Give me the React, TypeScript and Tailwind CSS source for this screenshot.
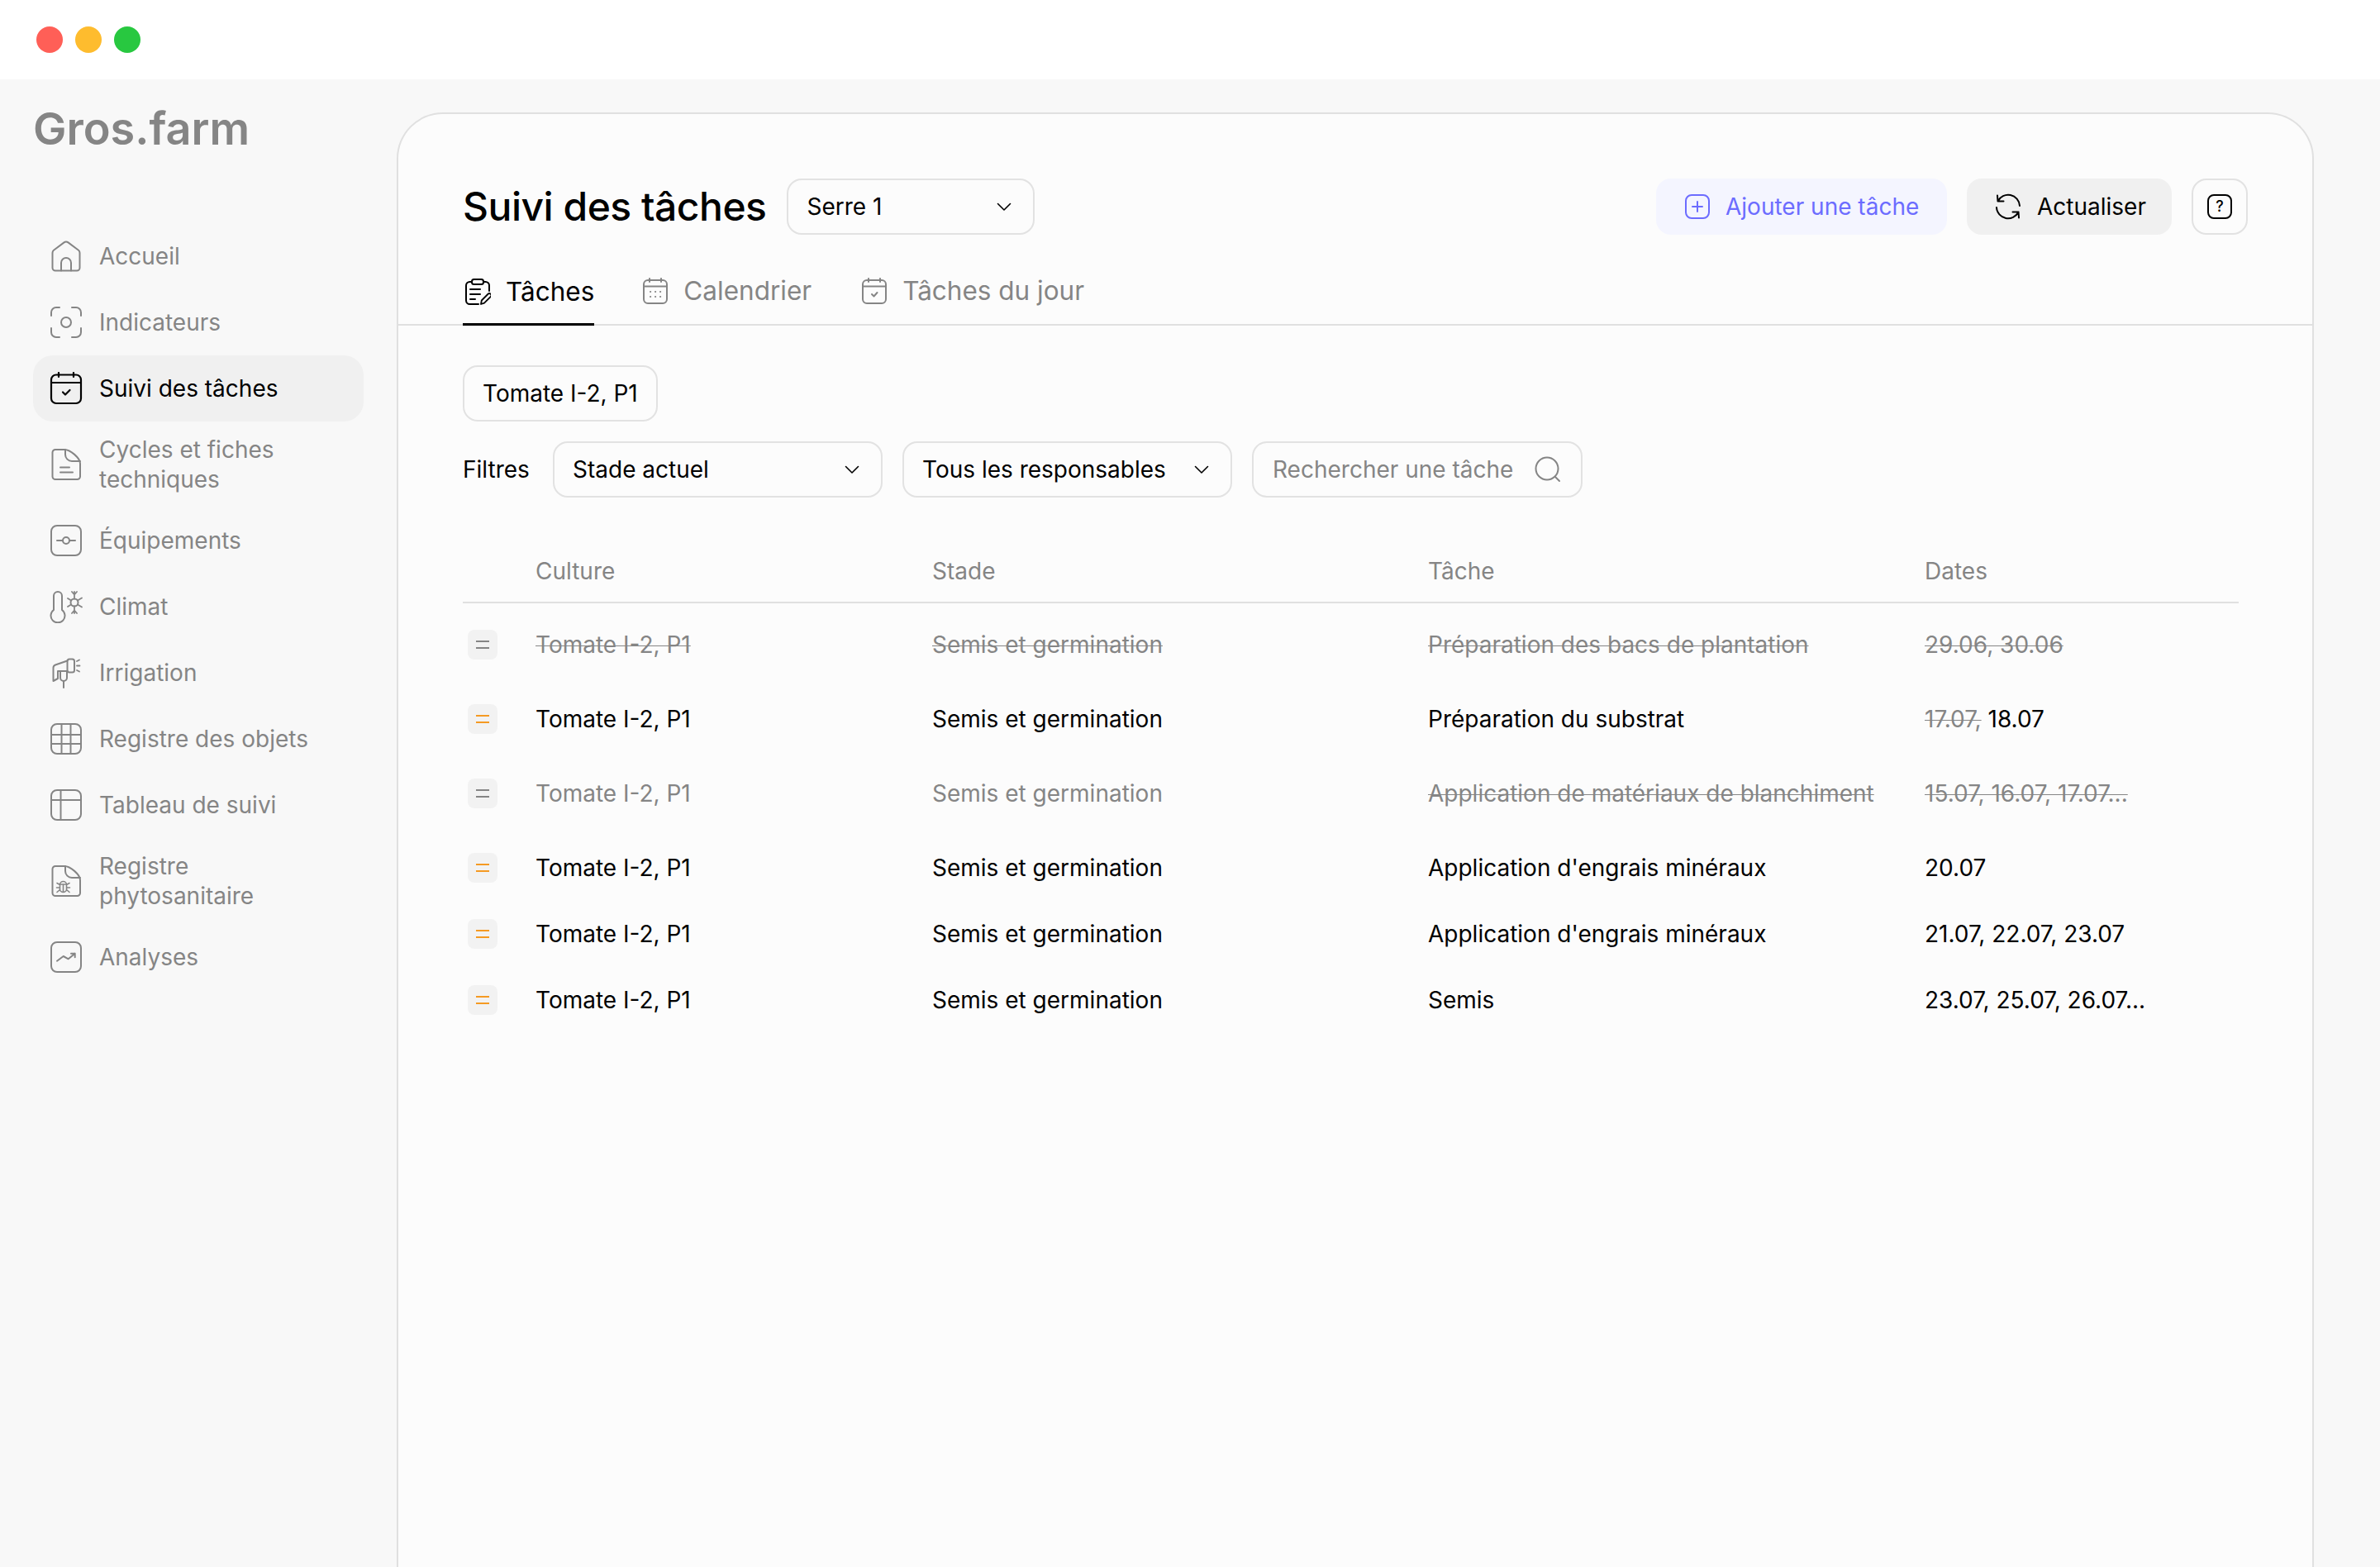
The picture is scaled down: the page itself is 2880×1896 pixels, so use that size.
import React from 'react';

const font = "font-['Inter','Noto_Sans',sans-serif]";

const IconBase = ({ children, className = 'w-10 h-10', box = 40 }: { children: React.ReactNode; className?: string; box?: number }) => (
  <svg className={className} viewBox={`0 0 ${box} ${box}`} fill="none" stroke="currentColor" strokeWidth="2" strokeLinecap="round" strokeLinejoin="round">
    {children}
  </svg>
);

const HomeIcon = () => (
  <IconBase>
    <path d="M3.5 16q0-2 1.5-3.2L17.5 3.4q2.5-1.9 5 0L35 12.800q1.500 1.200 1.500 3.200V34a3.500 3.500 0 0 1-3.500 3.500H7A3.500 3.500 0 0 1 3.500 34z" />
    <path d="M14 37.500V28a6 6 0 0 1 12 0v9.500" />
  </IconBase>
);
const ScanIcon = () => (
  <IconBase>
    <path d="M2 12V8a6 6 0 0 1 6-6h4M27 2h5a6 6 0 0 1 6 6v4M38 27v5a6 6 0 0 1-6 6h-5M12 38H8a6 6 0 0 1-6-6v-5" />
    <circle cx="20" cy="20" r="6" />
  </IconBase>
);
const CalCheckIcon = () => (
  <IconBase>
    <rect x="2" y="3.500" width="36" height="34.500" rx="6" strokeWidth="2.200" />
    <path d="M2 13h36M11 1v5M29 1v5" strokeWidth="2.200" />
    <path d="M16 24.500l3 3 5.500-5.500" strokeWidth="2.200" />
  </IconBase>
);
const DocIcon = () => (
  <IconBase>
    <path d="M7 2h11c7 0 19 10 19 17v15.500a3.500 3.500 0 0 1-3.500 3.500H7a3.500 3.500 0 0 1-3.500-3.500V5.500A3.500 3.500 0 0 1 7 2z" />
    <path d="M19 2v6a8 8 0 0 0 8 8h10M13 23.500h11M13 29.500h15" />
  </IconBase>
);
const EquipIcon = () => (
  <IconBase>
    <rect x="2" y="2" width="36" height="36" rx="7" />
    <circle cx="20" cy="20" r="4" />
    <path d="M9 20h7M24 20h7" />
  </IconBase>
);
const ClimateIcon = () => (
  <IconBase>
    <path d="M5 24V7a5 5 0 0 1 10 0v17a8.500 8.500 0 1 1-10 0z" />
    <circle cx="30" cy="15" r="4.500" />
    <path d="M30 10.500V2M30 19.500V28M27 2l3 3.500L33 2M27 28l3-3.500L33 28M34 12.500l5-3M34 17.500l5 3M26 12.500l-4-2.500M26 17.500l-4 2.500" strokeWidth="1.800" />
  </IconBase>
);
const IrrigationIcon = () => (
  <IconBase>
    <path d="M4.500 30V14q0-2.500 2.500-3.500l14.500-5M21.500 18H10v9l-5.500 3" />
    <rect x="21.500" y="3.500" width="8.500" height="16" rx="2.500" />
    <path d="M13 18v8a4 4 0 0 0 8 0v-8M17 30v8" />
    <path d="M33 6l3-1.500M33 11.500h3.500M33 17l3 1.500" strokeWidth="1.800" />
  </IconBase>
);
const GridIcon = () => (
  <IconBase>
    <rect x="2" y="2" width="36" height="36" rx="7" />
    <path d="M14.500 2v36M25.500 2v36M2 15h36M2 26h36" />
  </IconBase>
);
const TableIcon = () => (
  <IconBase>
    <rect x="2" y="2" width="36" height="36" rx="7" />
    <path d="M13.500 2v36M2 14h36" />
  </IconBase>
);
const DocBugIcon = () => (
  <IconBase>
    <path d="M7 2h11c7 0 19 10 19 17v15.500a3.500 3.500 0 0 1-3.500 3.500H7a3.500 3.500 0 0 1-3.500-3.500V5.500A3.500 3.500 0 0 1 7 2z" />
    <path d="M19 2v6a8 8 0 0 0 8 8h10" />
    <path d="M12.500 24c0-2 2-3.500 4-3.500s4 1.500 4 3.500v6c0 2-2 3.500-4 3.500s-4-1.500-4-3.500zM12.500 24h8M16.500 24v9.500M9 22.500l3.500 2M24 22.500l-3.500 2M8.500 28h4M24.500 28h-4M9 33.500l3.500-3M24 33.500l-3.500-3" strokeWidth="1.600" />
  </IconBase>
);
const ChartIcon = () => (
  <IconBase>
    <rect x="2" y="2" width="36" height="36" rx="7" />
    <path d="M9 24.700l7.700-5.700 6 3.300 8-6.600M26 15.700h4.700v4.600" />
  </IconBase>
);
const ChevronDown = () => (
  <svg className="w-5 h-5" viewBox="0 0 20 20" fill="none" stroke="#000" strokeWidth="1.600" strokeLinecap="round" strokeLinejoin="round">
    <path d="M2.500 6.500l7.500 7.500 7.500-7.500" />
  </svg>
);
const ClipboardIcon = () => (
  <IconBase className="w-8 h-8" box={32}>
    <path d="M9 4H6.500A4.500 4.500 0 0 0 2 8.500v18A4.500 4.500 0 0 0 6.500 31H17M23 4h2.500A4.500 4.500 0 0 1 30 8.500V15" />
    <rect x="9" y="1" width="14" height="6" rx="2.500" />
    <path d="M7 13h12M7 19h12M7 25h6" />
    <path d="M20 31l.800-4.500 8-8a2.300 2.300 0 0 1 3.200 3.200l-8 8z" strokeWidth="1.800" />
  </IconBase>
);
const CalendarDotsIcon = () => (
  <IconBase className="w-8 h-8" box={32}>
    <rect x="2" y="3" width="28" height="28" rx="5" />
    <path d="M2 10.500h28M9 1v4M23 1v4M10 17h.2M16 17h.2M22 17h.2M10 23h.2M16 23h.2M22 23h.2" />
  </IconBase>
);
const CalendarCheckSmall = () => (
  <IconBase className="w-8 h-8" box={32}>
    <rect x="2" y="3" width="28" height="28" rx="5" />
    <path d="M2 10.500h28M9 1v4M23 1v4M13 20l2.500 2.500 4-4.500" />
  </IconBase>
);

const navItems = [
  { label: 'Accueil', icon: <HomeIcon /> },
  { label: 'Indicateurs', icon: <ScanIcon /> },
  { label: 'Suivi des tâches', icon: <CalCheckIcon />, active: true },
  { label: 'Cycles et fiches techniques', icon: <DocIcon /> },
  { label: 'Équipements', icon: <EquipIcon /> },
  { label: 'Climat', icon: <ClimateIcon /> },
  { label: 'Irrigation', icon: <IrrigationIcon /> },
  { label: 'Registre des objets', icon: <GridIcon /> },
  { label: 'Tableau de suivi', icon: <TableIcon /> },
  { label: 'Registre phytosanitaire', icon: <DocBugIcon /> },
  { label: 'Analyses', icon: <ChartIcon /> },
];

const rows = [
  { culture: 'Tomate I-2, P1', stade: 'Semis et germination', tache: 'Préparation des bacs de plantation', dates: '29.06, 30.06', state: 'struck' },
  { culture: 'Tomate I-2, P1', stade: 'Semis et germination', tache: 'Préparation du substrat', struckDate: '17.07,', dates: ' 18.07', state: 'active' },
  { culture: 'Tomate I-2, P1', stade: 'Semis et germination', tache: 'Application de matériaux de blanchiment', dates: '15.07, 16.07, 17.07...', state: 'partial' },
  { culture: 'Tomate I-2, P1', stade: 'Semis et germination', tache: "Application d'engrais minéraux", dates: '20.07', state: 'active' },
  { culture: 'Tomate I-2, P1', stade: 'Semis et germination', tache: "Application d'engrais minéraux", dates: '21.07, 22.07, 23.07', state: 'active' },
  { culture: 'Tomate I-2, P1', stade: 'Semis et germination', tache: 'Semis', dates: '23.07, 25.07, 26.07...', state: 'active' },
];

const strike = 'line-through decoration-[1px]';

const Select = ({ label, className }: { label: string; className: string }) => (
  <div className={`h-[68px] flex items-center justify-between pl-[22px] pr-[25px] border-2 border-[#e2e2e2] rounded-[18px] text-[28px] text-black ${className}`}>
    <span>{label}</span>
    <ChevronDown />
  </div>
);

const PriorityBadge = ({ orange }: { orange: boolean }) => (
  <div className="w-9 h-9 ml-1.5 rounded-lg bg-[#f2f2f2] flex flex-col items-center justify-center gap-[6px]">
    <span className={`block w-4 h-0.5 ${orange ? 'bg-[#f59a23]' : 'bg-[#858585]'}`} />
    <span className={`block w-4 h-0.5 ${orange ? 'bg-[#f59a23]' : 'bg-[#858585]'}`} />
  </div>
);

export default function App() {
  return (
    <div className={`${font} w-[2880px] h-[1896px] overflow-hidden bg-white flex flex-col`}>
      <div className="h-24 shrink-0 bg-white flex items-center gap-[15px] pl-11">
        <span className="w-8 h-8 rounded-full bg-[#ff5f57]" />
        <span className="w-8 h-8 rounded-full bg-[#febc2e]" />
        <span className="w-8 h-8 rounded-full bg-[#28c840]" />
      </div>
      <div className="flex-1 min-h-0 flex bg-[#f8f8f8]">
        <aside className="w-[480px] shrink-0 px-10">
          <div className="h-[174px] pt-[28px] text-[54px] leading-[64px] font-semibold text-[#858585]">Gros.farm</div>
          <nav className="flex flex-col">
            {navItems.map((item) => (
              <div
                key={item.label}
                className={`min-h-20 py-4 pl-5 pr-6 flex items-center gap-5 rounded-3xl text-[28px] leading-9 ${item.active ? 'bg-[#f0f0f0] text-black' : 'text-[#858585]'}`}
              >
                <span className="shrink-0 w-10 h-10">{item.icon}</span>
                <span>{item.label}</span>
              </div>
            ))}
          </nav>
        </aside>
        <main className="mt-10 w-[2320px] rounded-t-[56px] border-2 border-b-0 border-[#e0e0e0] bg-[#fcfcfc]">
          <div className="pt-[78px] px-[78px] flex items-center">
            <h1 className="text-[48px] font-medium text-black leading-[68px] tracking-[-0.5px]">Suivi des tâches</h1>
            <Select label="Serre 1" className="w-[300px] ml-[25px]" />
            <button className="ml-auto h-[68px] w-[352px] flex items-center gap-[18px] pl-[34px] rounded-[18px] bg-[#f4f5ff] text-[#6c6cff] text-[28px]">
              <IconBase className="w-8 h-8" box={32}><rect x="2" y="2" width="28" height="28" rx="7" /><path d="M16 10v12M10 16h12" /></IconBase>
              Ajouter une tâche
            </button>
            <button className="ml-6 h-[68px] w-[248px] flex items-center gap-[19px] pl-[34px] rounded-[18px] bg-[#f0f0f0] text-black text-[28px]">
              <IconBase className="w-8 h-8" box={32}>
                <path d="M3.500 9.500A14 14 0 0 1 30 15M3 2.500l.5 7h7M2 17a14 14 0 0 0 26.500 5.500M29 29.500l-.5-7h-7" />
              </IconBase>
              Actualiser
            </button>
            <button className="ml-6 w-[68px] h-[68px] flex items-center justify-center rounded-[18px] border-2 border-[#e2e2e2] text-black">
              <span className="w-[30px] h-[30px] rounded-lg border-2 border-black flex items-center justify-center text-[18px] font-medium leading-none">?</span>
            </button>
          </div>
          <div className="mt-5 h-[90px] px-[78px] flex items-end gap-[58px] border-b-2 border-[#e0e0e0] text-[31.5px]">
            <div className="h-20 -mb-0.5 pl-0.5 flex items-center gap-[18px] border-b-[3px] border-black text-black">
              <ClipboardIcon />
              Tâches
            </div>
            <div className="h-20 flex items-center gap-[18px] text-[#858585]">
              <CalendarDotsIcon />
              Calendrier
            </div>
            <div className="h-20 ml-0.5 flex items-center gap-[18px] text-[#858585]">
              <CalendarCheckSmall />
              Tâches du jour
            </div>
          </div>
          <div className="px-[78px] pt-12">
            <div className="w-fit h-[68px] flex items-center px-[22px] border-2 border-[#e2e2e2] rounded-[18px] text-[28px] text-black">Tomate I-2, P1</div>
            <div className="mt-6 flex items-center text-[28px] text-black">
              <span className="w-[109px]">Filtres</span>
              <Select label="Stade actuel" className="w-[399px]" />
              <Select label="Tous les responsables" className="w-[399px] ml-6" />
              <div className="w-[400px] ml-6 h-[68px] flex items-center justify-between pl-[23px] pr-6 border-2 border-[#e2e2e2] rounded-[18px] text-[#858585]">
                <span>Rechercher une tâche</span>
                <svg className="w-8 h-8" viewBox="0 0 32 32" fill="none" stroke="#858585" strokeWidth="2" strokeLinecap="round">
                  <circle cx="15" cy="15" r="13.500" />
                  <path d="M25 25l5 5" />
                </svg>
              </div>
            </div>
            <div className="mt-[51px] w-[2149px]">
              <div className="grid grid-cols-[88px_480px_600px_601px_380px] h-[77px] items-center border-b-2 border-[#e0e0e0] text-[28px] text-[#858585]">
                <span />
                <span>Culture</span>
                <span>Stade</span>
                <span>Tâche</span>
                <span>Dates</span>
              </div>
              {rows.map((row, i) => {
                const muted = row.state !== 'active';
                const struck = row.state === 'struck';
                return (
                  <div
                    key={i}
                    className={`grid grid-cols-[88px_480px_600px_601px_380px] items-center text-[28px] ${muted ? 'h-[100px] text-[#858585]' : 'h-20 text-black'}`}
                  >
                    <PriorityBadge orange={!muted} />
                    <span className={struck ? strike : ''}>{row.culture}</span>
                    <span className={struck ? strike : ''}>{row.stade}</span>
                    <span className={muted ? strike : ''}>{row.tache}</span>
                    <span className={muted ? strike : ''}>
                      {row.struckDate && <span className={`${strike} text-[#858585]`}>{row.struckDate}</span>}
                      {row.dates}
                    </span>
                  </div>
                );
              })}
            </div>
          </div>
        </main>
      </div>
    </div>
  );
}
